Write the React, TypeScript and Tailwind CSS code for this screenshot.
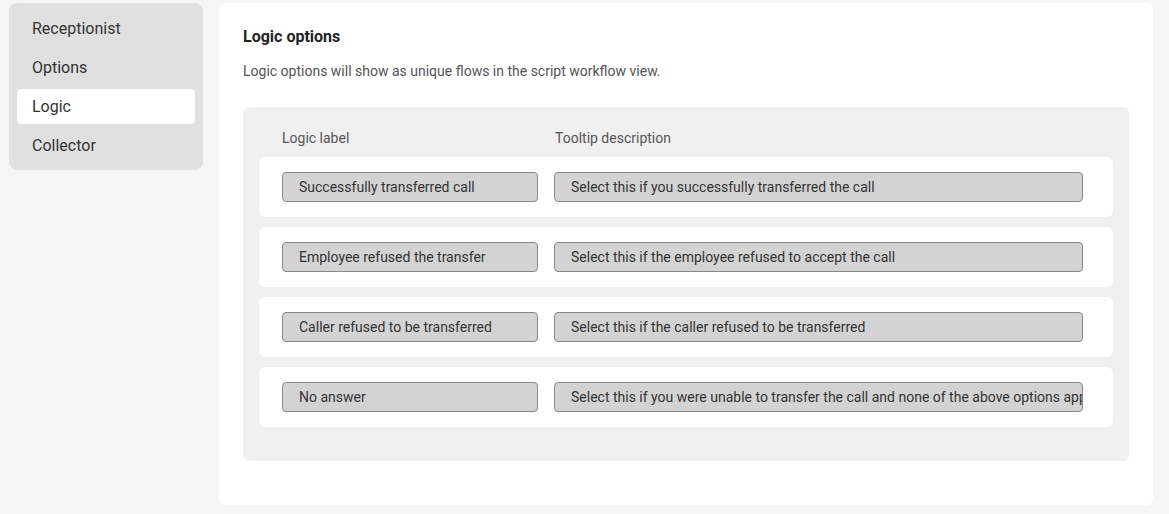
import React from 'react'

const navItems = ['Receptionist', 'Options', 'Logic', 'Collector']

const logicRows = [
  { label: 'Successfully transferred call', tooltip: 'Select this if you successfully transferred the call' },
  { label: 'Employee refused the transfer', tooltip: 'Select this if the employee refused to accept the call' },
  { label: 'Caller refused to be transferred', tooltip: 'Select this if the caller refused to be transferred' },
  {
    label: 'No answer',
    tooltip: 'Select this if you were unable to transfer the call and none of the above options apply',
  },
]

export default function App() {
  return (
    <div
      className="flex gap-4 bg-[#f6f6f6] pl-[9px] pr-4 pt-[3px] pb-[9px] min-h-[514px] text-[#333]"
      style={{ fontFamily: 'Roboto, "Liberation Sans", sans-serif' }}
    >
      {/* Sidebar */}
      <div className="w-[194px] self-start rounded-lg bg-[#e0e0e0] px-2 pt-[8px] pb-[7px] flex flex-col gap-1">
        {navItems.map((item) => (
          <div
            key={item}
            className={`h-[35px] flex items-center pl-[15px] rounded text-base ${
              item === 'Logic' ? 'bg-white' : ''
            }`}
          >
            {item}
          </div>
        ))}
      </div>

      {/* Main */}
      <div className="flex-1 rounded-md bg-white px-6 pt-[22px] pb-[44px]">
        <h2 className="text-base font-bold leading-6 text-[#222]">Logic options</h2>
        <p className="mt-[12px] text-sm leading-5 text-[#555]">
          Logic options will show as unique flows in the script workflow view.
        </p>

        <div className="mt-[26px] rounded-md bg-[#f0f0f0] px-4 pt-[21px] pb-[34px]">
          <div className="flex gap-4 pl-[23px] text-sm leading-5 text-[#555]">
            <div className="w-[256px]">Logic label</div>
            <div className="pl-[1px]">Tooltip description</div>
          </div>

          <div className="mt-[9px] flex flex-col gap-[10px]">
            {logicRows.map((row) => (
              <div key={row.label} className="h-[60px] rounded-md bg-white flex items-center gap-4 pl-[23px] pr-[30px]">
                <input
                  readOnly
                  value={row.label}
                  className="w-[256px] h-[30px] rounded border border-[#888] bg-[#d3d3d3] pl-4 pr-2 text-sm text-[#333] outline-none"
                  style={{ fontFamily: 'Roboto, "Liberation Sans", sans-serif' }}
                />
                <input
                  readOnly
                  value={row.tooltip}
                  className="flex-1 min-w-0 h-[30px] rounded border border-[#888] bg-[#d3d3d3] pl-4 pr-0 text-sm text-[#333] outline-none"
                  style={{ fontFamily: 'Roboto, "Liberation Sans", sans-serif' }}
                />
              </div>
            ))}
          </div>
        </div>
      </div>
    </div>
  )
}
